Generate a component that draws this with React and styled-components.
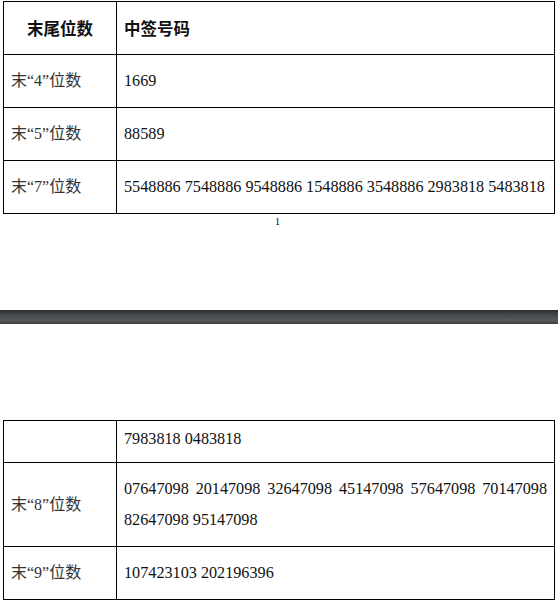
import React from 'react';
import styled, { createGlobalStyle } from 'styled-components';

const GlobalStyle = createGlobalStyle`
  html, body {
    margin: 0;
    padding: 0;
    background: #fff;
  }
  body {
    font-family: "Liberation Serif", "Noto Sans CJK SC", serif;
    color: #000;
  }
`;

const Sheet = styled.div`
  width: 558px;
  height: 601px;
  overflow: hidden;
  background: #fff;
`;

const Page = styled.section`
  height: ${(p) => p.height}px;
  padding: ${(p) => p.top}px 3px 0 3px;
  box-sizing: border-box;
`;

const Table = styled.table`
  width: 552px;
  border-collapse: collapse;
  table-layout: fixed;
`;

const Row = styled.tr`
  height: ${(p) => p.h}px;
`;

const Cell = styled.td`
  border: 1px solid #000;
  padding: 0 7px ${(p) => p.lift || 0}px 7px;
  vertical-align: middle;
  font-size: 16.2px;
  line-height: ${(p) => p.lh || 20}px;
  white-space: ${(p) => (p.justify ? 'normal' : 'nowrap')};
  text-align: ${(p) => (p.justify ? 'justify' : 'left')};
  text-align-last: ${(p) => (p.justify ? 'left' : 'auto')};
  color: #111;
`;

const HeadCell = styled(Cell)`
  font-family: "Noto Sans CJK SC", sans-serif;
  font-weight: 700;
  font-size: 16.5px;
  text-align: ${(p) => (p.center ? 'center' : 'left')};
`;

const Label = styled.span`
  font-family: "Liberation Serif", "Noto Sans CJK SC", serif;
  color: #333;
  font-size: 16px;
`;

const PageNo = styled.div`
  text-align: center;
  font-size: 10px;
  margin-top: 2px;
  padding-right: 3px;
`;

const Divider = styled.div`
  height: 14px;
  background: linear-gradient(#2c2d2f 0%, #45484b 35%, #55585c 75%, #3a3c3e 100%);
`;

const ColA = styled.col`
  width: 113px;
`;

const label = (d) => `末“${d}”位数`;

export default function App() {
  return (
    <Sheet>
      <GlobalStyle />
      <Page height={310} top={1}>
        <Table>
          <colgroup>
            <ColA />
            <col />
          </colgroup>
          <tbody>
            <Row h={53}>
              <HeadCell center>末尾位数</HeadCell>
              <HeadCell>中签号码</HeadCell>
            </Row>
            <Row h={53}>
              <Cell><Label>{label(4)}</Label></Cell>
              <Cell>1669</Cell>
            </Row>
            <Row h={53}>
              <Cell><Label>{label(5)}</Label></Cell>
              <Cell>88589</Cell>
            </Row>
            <Row h={53}>
              <Cell><Label>{label(7)}</Label></Cell>
              <Cell>5548886 7548886 9548886 1548886 3548886 2983818 5483818</Cell>
            </Row>
          </tbody>
        </Table>
        <PageNo>1</PageNo>
      </Page>
      <Divider />
      <Page height={277} top={96}>
        <Table>
          <colgroup>
            <ColA />
            <col />
          </colgroup>
          <tbody>
            <Row h={42}>
              <Cell />
              <Cell lift={6}>7983818 0483818</Cell>
            </Row>
            <Row h={84}>
              <Cell><Label>{label(8)}</Label></Cell>
              <Cell lh={31} justify>
                07647098 20147098 32647098 45147098 57647098 70147098 82647098 95147098
              </Cell>
            </Row>
            <Row h={53}>
              <Cell><Label>{label(9)}</Label></Cell>
              <Cell>107423103 202196396</Cell>
            </Row>
          </tbody>
        </Table>
      </Page>
    </Sheet>
  );
}
